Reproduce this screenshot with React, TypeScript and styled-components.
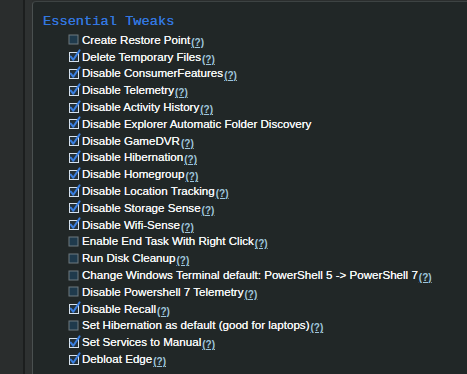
import React from "react";
import styled, { createGlobalStyle } from "styled-components";

const GlobalStyle = createGlobalStyle`
  html, body {
    margin: 0;
    padding: 0;
    background: #2b2e2e;
    overflow: hidden;
  }
`;

const Page = styled.div`
  display: flex;
  width: 467px;
  height: 374px;
  background: #2b2e2e;
`;

const SideRail = styled.div`
  display: flex;
  width: 32px;
  flex-shrink: 0;
  .outer {
    width: 23px;
    background: #2a2d2d;
  }
  .seam {
    width: 2px;
    background: #1c1e1e;
  }
  .inner {
    flex: 1;
    background: #2e3131;
  }
`;

const Panel = styled.div`
  flex: 1;
  margin-top: 1px;
  background: #212727;
  border-top: 1px solid #3d4343;
  border-left: 1px solid #4a5050;
  border-top-left-radius: 4px;
  padding: 11px 0 0 10px;
`;

const Title = styled.h2`
  margin: 0;
  font-family: "Liberation Mono", "DejaVu Sans Mono", monospace;
  font-size: 13.7px;
  font-weight: normal;
  line-height: 18px;
  color: #3377e0;
  text-shadow: 0 0 0.5px #3377e0;
`;

const List = styled.ul`
  list-style: none;
  margin: 0;
  padding: 0 0 0 24px;
`;

const Row = styled.li`
  display: flex;
  align-items: center;
  height: 16.8px;
  font-family: "Liberation Sans", Arial, sans-serif;
  font-size: 11.6px;
  color: #f4f6f6;
  white-space: nowrap;
`;

const Box = styled.span`
  width: 15px;
  height: 14px;
  flex-shrink: 0;
  display: flex;
  align-items: center;
  svg {
    display: block;
  }
`;

const Label = styled.span`
  text-shadow: 0 0 0.5px #ffffff;
`;

const Help = styled.a`
  font-size: 10px;
  color: #9fc6dc;
  text-decoration: underline;
  position: relative;
  top: 3px;
  margin-left: 1px;
  font-weight: bold;
`;

function Check({ on }: { on: boolean }) {
  if (!on) {
    return (
      <svg width="12" height="12" viewBox="0 0 12 12">
        <rect x="2" y="2" width="9" height="9" fill="#1f3a4c" stroke="#6f7a80" strokeWidth="1" />
      </svg>
    );
  }
  return (
    <svg width="15" height="14" viewBox="0 0 15 14">
      <rect x="2.5" y="3.5" width="9" height="9" fill="#24313a" stroke="#d6e2ee" strokeWidth="1" />
      <path d="M3.8 7.6 L6.3 10.8 L12.6 1.4" fill="none" stroke="#3a7fe0" strokeWidth="2" strokeLinecap="round" strokeLinejoin="round" />
    </svg>
  );
}

const tweaks: { label: string; on: boolean }[] = [
  { label: "Create Restore Point", on: false },
  { label: "Delete Temporary Files", on: true },
  { label: "Disable ConsumerFeatures", on: true },
  { label: "Disable Telemetry", on: true },
  { label: "Disable Activity History", on: true },
  { label: "Disable Explorer Automatic Folder Discovery", on: true },
  { label: "Disable GameDVR", on: true },
  { label: "Disable Hibernation", on: true },
  { label: "Disable Homegroup", on: true },
  { label: "Disable Location Tracking", on: true },
  { label: "Disable Storage Sense", on: true },
  { label: "Disable Wifi-Sense", on: true },
  { label: "Enable End Task With Right Click", on: false },
  { label: "Run Disk Cleanup", on: false },
  { label: "Change Windows Terminal default: PowerShell 5 -> PowerShell 7", on: false },
  { label: "Disable Powershell 7 Telemetry", on: false },
  { label: "Disable Recall", on: true },
  { label: "Set Hibernation as default (good for laptops)", on: false },
  { label: "Set Services to Manual", on: true },
  { label: "Debloat Edge", on: true },
];

const noHelp = new Set(["Disable Explorer Automatic Folder Discovery"]);

export default function App() {
  return (
    <>
      <GlobalStyle />
      <Page>
        <SideRail>
          <div className="outer" />
          <div className="seam" />
          <div className="inner" />
        </SideRail>
        <Panel>
          <Title>Essential Tweaks</Title>
          <List>
            {tweaks.map((t) => (
              <Row key={t.label}>
                <Box>
                  <Check on={t.on} />
                </Box>
                <Label>{t.label}</Label>
                {!noHelp.has(t.label) && <Help>(?)</Help>}
              </Row>
            ))}
          </List>
        </Panel>
      </Page>
    </>
  );
}
